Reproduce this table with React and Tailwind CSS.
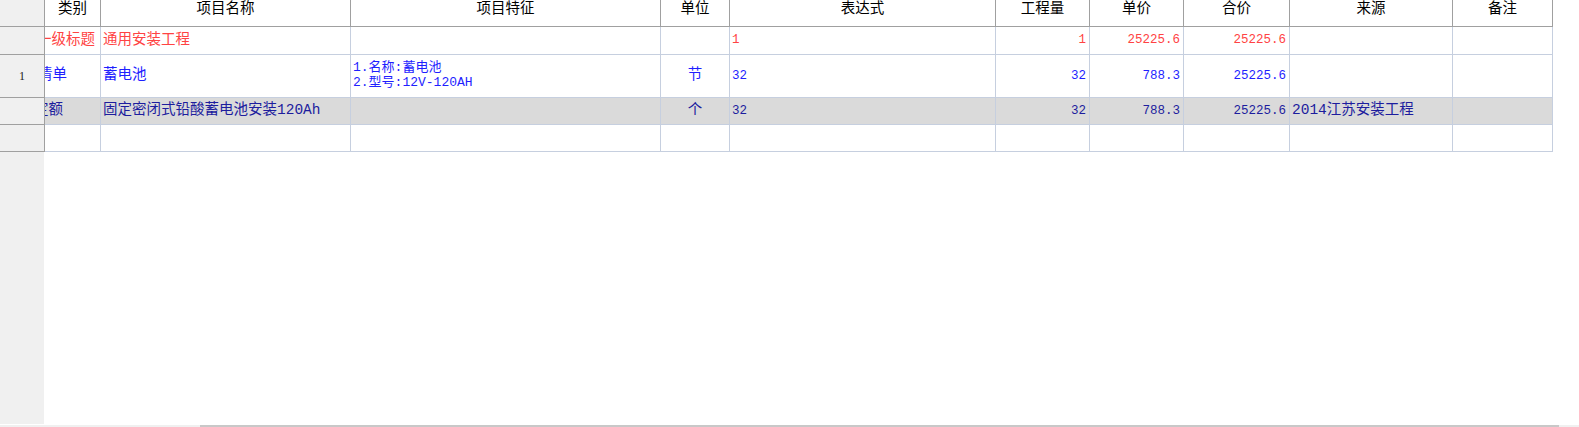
import React from "react";

const COLS = [
  { key: "type", title: "类别", w: "w-[56px]" },
  { key: "name", title: "项目名称", w: "w-[250px]" },
  { key: "feat", title: "项目特征", w: "w-[310px]" },
  { key: "unit", title: "单位", w: "w-[69px]" },
  { key: "expr", title: "表达式", w: "w-[266px]" },
  { key: "qty", title: "工程量", w: "w-[94px]" },
  { key: "price", title: "单价", w: "w-[94px]" },
  { key: "total", title: "合价", w: "w-[106px]" },
  { key: "src", title: "来源", w: "w-[163px]" },
  { key: "note", title: "备注", w: "w-[100px]" },
];

const ROWS = [
  {
    no: "",
    h: "h-[28px]",
    bg: "bg-white",
    color: "text-[#ff4343]",
    typeShift: "-ml-[8px]",
    cells: {
      type: "一级标题",
      name: "通用安装工程",
      expr: "1",
      qty: "1",
      price: "25225.6",
      total: "25225.6",
    },
  },
  {
    no: "1",
    h: "h-[43px]",
    bg: "bg-white",
    color: "text-[#1f1fff]",
    typeShift: "-ml-[7px]",
    cells: {
      type: "清单",
      name: "蓄电池",
      feat: ["1.名称:蓄电池", "2.型号:12V-120AH"],
      unit: "节",
      expr: "32",
      qty: "32",
      price: "788.3",
      total: "25225.6",
    },
  },
  {
    no: "",
    h: "h-[27px]",
    bg: "bg-[#dadada]",
    color: "text-[#1d1d9e]",
    typeShift: "-ml-[11px]",
    cells: {
      type: "定额",
      name: "固定密闭式铅酸蓄电池安装120Ah",
      unit: "个",
      expr: "32",
      qty: "32",
      price: "788.3",
      total: "25225.6",
      src: "2014江苏安装工程",
    },
  },
  { no: "", h: "h-[27px]", bg: "bg-white", color: "", typeShift: "", cells: {} },
];

const RIGHT = ["qty", "price", "total"];

function BodyCell({ col, row }) {
  const v = row.cells[col.key];
  const base = `${col.w} shrink-0 h-full flex items-center overflow-hidden whitespace-nowrap border-r border-b border-[#c6cfdf] ${row.bg} ${row.color}`;

  if (col.key === "type") {
    return (
      <div className={`${base} text-[14.5px]`}>
        {v && <span className={`${row.typeShift} shrink-0`}>{v}</span>}
      </div>
    );
  }
  if (col.key === "feat") {
    return (
      <div className={`${base} pl-[2px] text-[13px] leading-[15px]`}>
        {v && (
          <div className="flex flex-col -mt-[3px]">
            {v.map((l) => (
              <span key={l}>{l}</span>
            ))}
          </div>
        )}
      </div>
    );
  }
  if (col.key === "unit") {
    return <div className={`${base} justify-center text-[14.5px]`}>{v}</div>;
  }
  if (RIGHT.includes(col.key)) {
    return <div className={`${base} justify-end pr-[3px] text-[12.5px]`}>{v}</div>;
  }
  if (col.key === "expr") {
    return <div className={`${base} pl-[2px] text-[12.5px]`}>{v}</div>;
  }
  return <div className={`${base} pl-[2px] text-[14.5px]`}>{v}</div>;
}

export default function App() {
  return (
    <div
      className="w-[1579px] h-[427px] bg-white flex flex-col overflow-hidden"
      style={{ fontFamily: '"Liberation Mono", "Noto Sans CJK SC", monospace' }}
    >
      {/* header */}
      <div className="flex h-[27px] shrink-0">
        <div className="w-[45px] shrink-0 h-full bg-[#f0f0f0] border-r border-b border-[#a0a0a0]" />
        {COLS.map((c) => (
          <div
            key={c.key}
            className={`${c.w} shrink-0 h-full flex justify-center items-start overflow-hidden bg-white border-r border-b border-[#a0a0a0] text-black text-[14.5px] leading-[15px] font-['Noto_Sans_CJK_SC',sans-serif]`}
          >
            <span className="-mt-[1px]">{c.title}</span>
          </div>
        ))}
      </div>

      {/* body */}
      {ROWS.map((r, i) => (
        <div key={i} className={`flex ${r.h} shrink-0`}>
          <div className="w-[45px] shrink-0 h-full bg-[#f0f0f0] border-r border-b border-[#a0a0a0] flex items-center justify-center text-[12px] text-[#222] font-['Liberation_Serif',serif]">
            {r.no}
          </div>
          {COLS.map((c) => (
            <BodyCell key={c.key} col={c} row={r} />
          ))}
        </div>
      ))}

      {/* empty area */}
      <div className="flex-1 flex">
        <div className="w-[44px] h-full bg-[#f0f0f0]" />
      </div>
      <div className="h-[1px] shrink-0" />

      {/* horizontal scrollbar */}
      <div className="h-[2px] shrink-0 flex bg-[#f0f0f0]">
        <div className="w-[200px] shrink-0" />
        <div className="w-[1359px] shrink-0 bg-[#c8c8c8]" />
      </div>
    </div>
  );
}
